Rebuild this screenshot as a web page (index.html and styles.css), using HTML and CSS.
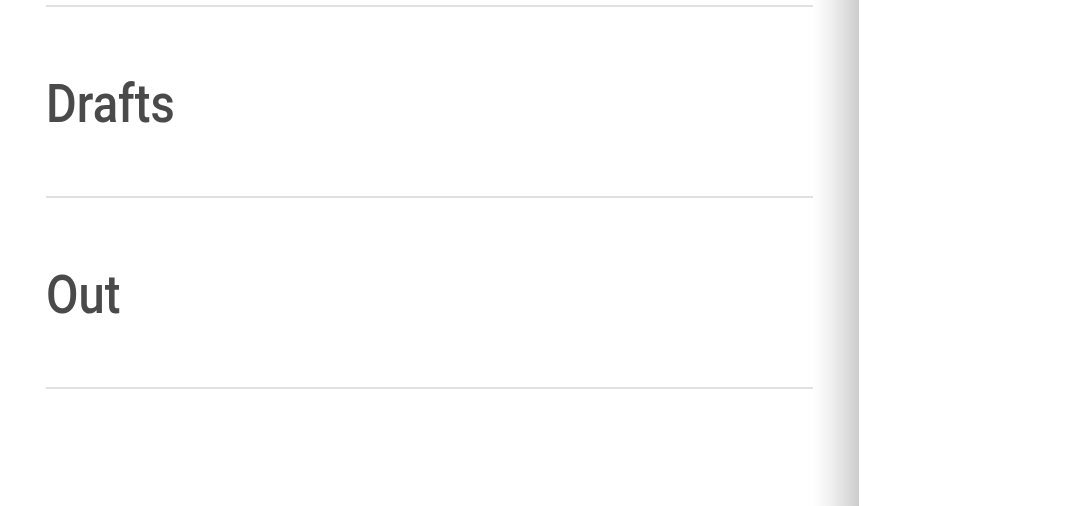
FILE: index.html
```html
<!DOCTYPE html>
<html>
<head>
<meta charset="utf-8">
<link rel="stylesheet" href="styles.css">
</head>
<body>
<div class="screen">
  <div class="drawer">
    <ul class="menu">
      <li class="item"><span class="label">Drafts</span></li>
      <li class="item"><span class="label">Out</span></li>
    </ul>
  </div>
  <div class="edge"></div>
  <div class="rest"></div>
</div>
</body>
</html>
```
FILE: styles.css
```css
html, body {
  margin: 0;
  padding: 0;
  background: #ffffff;
  overflow: hidden;
}
.screen {
  display: flex;
  width: 1074px;
  height: 506px;
}
.drawer {
  width: 813px;
  background: #ffffff;
}
.menu {
  list-style: none;
  margin: 0;
  padding: 5px 0 0 46px;
}
.menu .item:first-child {
  border-top: 2px solid #e0e0e0;
}
.item {
  height: 189px;
  border-bottom: 2px solid #e0e0e0;
  display: flex;
  align-items: center;
}
.label {
  display: inline-block;
  padding-top: 5px;
  font-family: Roboto, "Noto Sans", sans-serif;
  font-size: 53px;
  font-weight: 500;
  color: #4a4a4a;
  transform: scaleX(0.89);
  transform-origin: left center;
  line-height: 1;
}
.edge {
  width: 46px;
  background: linear-gradient(to right, #ffffff 0%, #f2f2f2 35%, #dcdcdc 75%, #cccccc 100%);
}
.rest {
  flex: 1;
  background: #ffffff;
}
```
